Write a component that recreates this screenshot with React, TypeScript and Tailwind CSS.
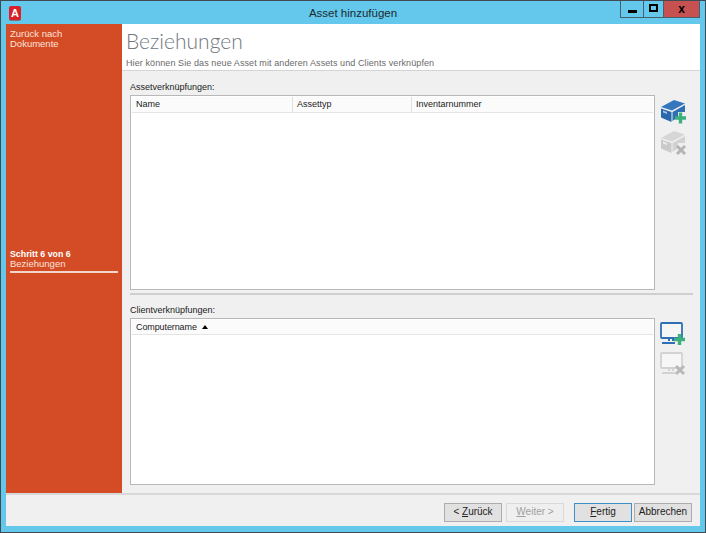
function BoxIcon({ disabled }: { disabled?: boolean }) {
  const top = disabled ? "#d6d6d6" : "#3577bd";
  const side = disabled ? "#cacaca" : "#2a68ad";
  const front = disabled ? "#d2d2d2" : "#2f6fb4";
  const mark = disabled ? "#b4b4b4" : "#3cb07c";
  return (
    <svg width="26" height="25" viewBox="0 0 26 25">
      <path d="M1 8 L14 1 L25 4.5 L12 11.5 Z" fill={top} />
      <path d="M1 9.5 L11.5 13 V23 L1 18.5 Z" fill={side} />
      <path d="M3 11.5 L7 13 V15 L3 13.5 Z" fill={disabled ? "#ececec" : "#9cc3e8"} />
      <path d="M12.5 13 L25 6 V13 H18 V18 L12.5 22 Z" fill={front} />
      {disabled ? (
        <path d="M17 16 L25 24 M25 16 L17 24" stroke={mark} strokeWidth="3" />
      ) : (
        <path d="M20.5 13.5 V24.5 M15 19 H26" stroke={mark} strokeWidth="3.4" />
      )}
    </svg>
  );
}

function MonitorIcon({ disabled }: { disabled?: boolean }) {
  const line = disabled ? "#d2d2d2" : "#2f6fb4";
  const mark = disabled ? "#b8b8b8" : "#3cb07c";
  return (
    <svg width="26" height="24" viewBox="0 0 26 24" fill="none">
      <rect x="1" y="1" width="21" height="15" rx="1" stroke={line} strokeWidth="1.8" fill="#f6f6f6" />
      <path d="M9 17 V19 M13 17 V19" stroke={line} strokeWidth="2" />
      <path d="M2 21 H15" stroke={line} strokeWidth="2" />
      {disabled ? (
        <path d="M16 14 L24 22 M24 14 L16 22" stroke={mark} strokeWidth="3" />
      ) : (
        <path d="M19.5 12 V23 M14 17.5 H25" stroke={mark} strokeWidth="3.4" />
      )}
    </svg>
  );
}

function FooterButton({
  children,
  disabled,
  primary,
  className,
}: {
  children: React.ReactNode;
  disabled?: boolean;
  primary?: boolean;
  className?: string;
}) {
  return (
    <button
      className={`h-[19px] w-[58px] border text-[10px] leading-none ${
        disabled
          ? "border-[#d9d9d9] bg-[#efefef] text-[#a0a0a0]"
          : primary
            ? "border-[#3c8fc8] bg-[#e1e1e1] text-[#222222]"
            : "border-[#adadad] bg-[#e1e1e1] text-[#222222]"
      } ${className ?? ""}`}
    >
      {children}
    </button>
  );
}

export default function App() {
  return (
    <div className="flex h-[533px] w-[706px] flex-col border border-[#3f4a52] bg-[#63c8eb] font-['Liberation_Sans',sans-serif] text-[9px] text-[#222222]">
      <div className="grid h-[23px] shrink-0 grid-cols-[100px_1fr_100px]">
        <div className="pl-[8px] pt-[5px]">
          <div className="flex h-[14px] w-[12px] items-center justify-center rounded-[2px] bg-[#d9202a] text-[11px] leading-none font-bold text-white shadow-[0_1px_0_#777777]">
            A
          </div>
        </div>
        <div className="pt-[3px] text-center text-[11.5px] leading-[18px] text-[#1d2a30]">Asset hinzufügen</div>
        <div className="flex justify-end pr-[5px]">
          <div className="flex h-[17px] border-x border-b border-[#47606e]">
            <div className="flex w-[23px] items-end justify-center border-r border-[#47606e] pb-[4px]">
              <div className="h-[3px] w-[9px] bg-black" />
            </div>
            <div className="flex w-[20px] items-start justify-center border-r border-[#47606e] pt-[3px]">
              <div className="h-[8px] w-[9px] border-[2px] border-black" />
            </div>
            <div className="flex w-[35px] items-center justify-center bg-[#c75050] pb-[1px] text-[12px] leading-none font-bold text-black">
              x
            </div>
          </div>
        </div>
      </div>

      <div className="mx-[5px] mb-[6px] flex min-h-0 flex-1 flex-col bg-[#f0f0f0]">
        <div className="flex min-h-0 flex-1">
          <aside className="flex w-[116px] shrink-0 flex-col bg-[#d44c26] px-[4px] pt-[5px] text-[9.5px] text-[#fbe3db]">
            <div className="leading-[10px]">
              Zurück nach
              <br />
              Dokumente
            </div>
            <div className="mt-[200px] border-b-2 border-[#f3d5ca] pb-[2px] leading-[10px]">
              <div className="text-[8.8px] font-bold text-white">Schritt 6 von 6</div>
              <div>Beziehungen</div>
            </div>
          </aside>

          <main className="flex min-w-0 flex-1 flex-col">
            <header className="h-[47px] shrink-0 border-b border-[#d4d4d4] bg-white pl-[4px]">
              <h1 className="pt-[4px] font-['Lato','Liberation_Sans',sans-serif] text-[21px] leading-[26px] font-light text-[#70777d]">
                Beziehungen
              </h1>
              <p className="pt-[4px] text-[9px] leading-[11px] tracking-[0.09px] text-[#6a6a6a]">
                Hier können Sie das neue Asset mit anderen Assets und Clients verknüpfen
              </p>
            </header>

            <section className="flex h-[222px] shrink-0 flex-col pl-[8px] pr-[7px] pt-[10px]">
              <label className="leading-[12px]">Assetverknüpfungen:</label>
              <div className="mt-[2px] flex min-h-0 flex-1 gap-[5px]">
                <div className="h-[195px] w-[525px] border border-[#b8b8b8] bg-white p-[1px]">
                  <div className="grid h-[16px] grid-cols-[161px_119px_1fr] border-b border-[#e5e5e5] bg-[#fbfbfb] leading-[15px]">
                    <div className="border-r border-[#e0e0e0] pl-[4px]">Name</div>
                    <div className="border-r border-[#e0e0e0] pl-[4px]">Assettyp</div>
                    <div className="pl-[4px]">Inventarnummer</div>
                  </div>
                </div>
                <div className="flex flex-col gap-[6px] pt-[4px]">
                  <BoxIcon />
                  <BoxIcon disabled />
                </div>
              </div>
            </section>

            <div className="ml-[8px] mr-[7px] h-[2px] shrink-0 bg-[#cfcfcf]" />

            <section className="flex min-h-0 flex-1 flex-col pl-[8px] pr-[7px] pt-[9px]">
              <label className="leading-[12px]">Clientverknüpfungen:</label>
              <div className="mt-[2px] flex min-h-0 flex-1 gap-[5px]">
                <div className="h-[167px] w-[525px] border border-[#b8b8b8] bg-white p-[1px]">
                  <div className="flex h-[15px] items-center gap-[5px] border-b border-[#e5e5e5] bg-[#fbfbfb] pl-[4px] leading-[13px]">
                    <span className="tracking-[-0.1px]">Computername</span>
                    <span className="h-0 w-0 border-x-[3px] border-b-[4px] border-x-transparent border-b-black" />
                  </div>
                </div>
                <div className="flex flex-col gap-[6px] pt-[4px]">
                  <MonitorIcon />
                  <MonitorIcon disabled />
                </div>
              </div>
            </section>
          </main>
        </div>

        <footer className="flex h-[33px] shrink-0 items-center justify-end border-t-2 border-[#d8d8d8] pr-[8px] pt-[3px]">
          <FooterButton>
            &lt; <u>Z</u>urück
          </FooterButton>
          <FooterButton disabled className="ml-[4px]">
            <u>W</u>eiter &gt;
          </FooterButton>
          <FooterButton primary className="ml-[10px]">
            <u>F</u>ertig
          </FooterButton>
          <FooterButton className="ml-[2px]">Abbrechen</FooterButton>
        </footer>
      </div>
    </div>
  );
}
